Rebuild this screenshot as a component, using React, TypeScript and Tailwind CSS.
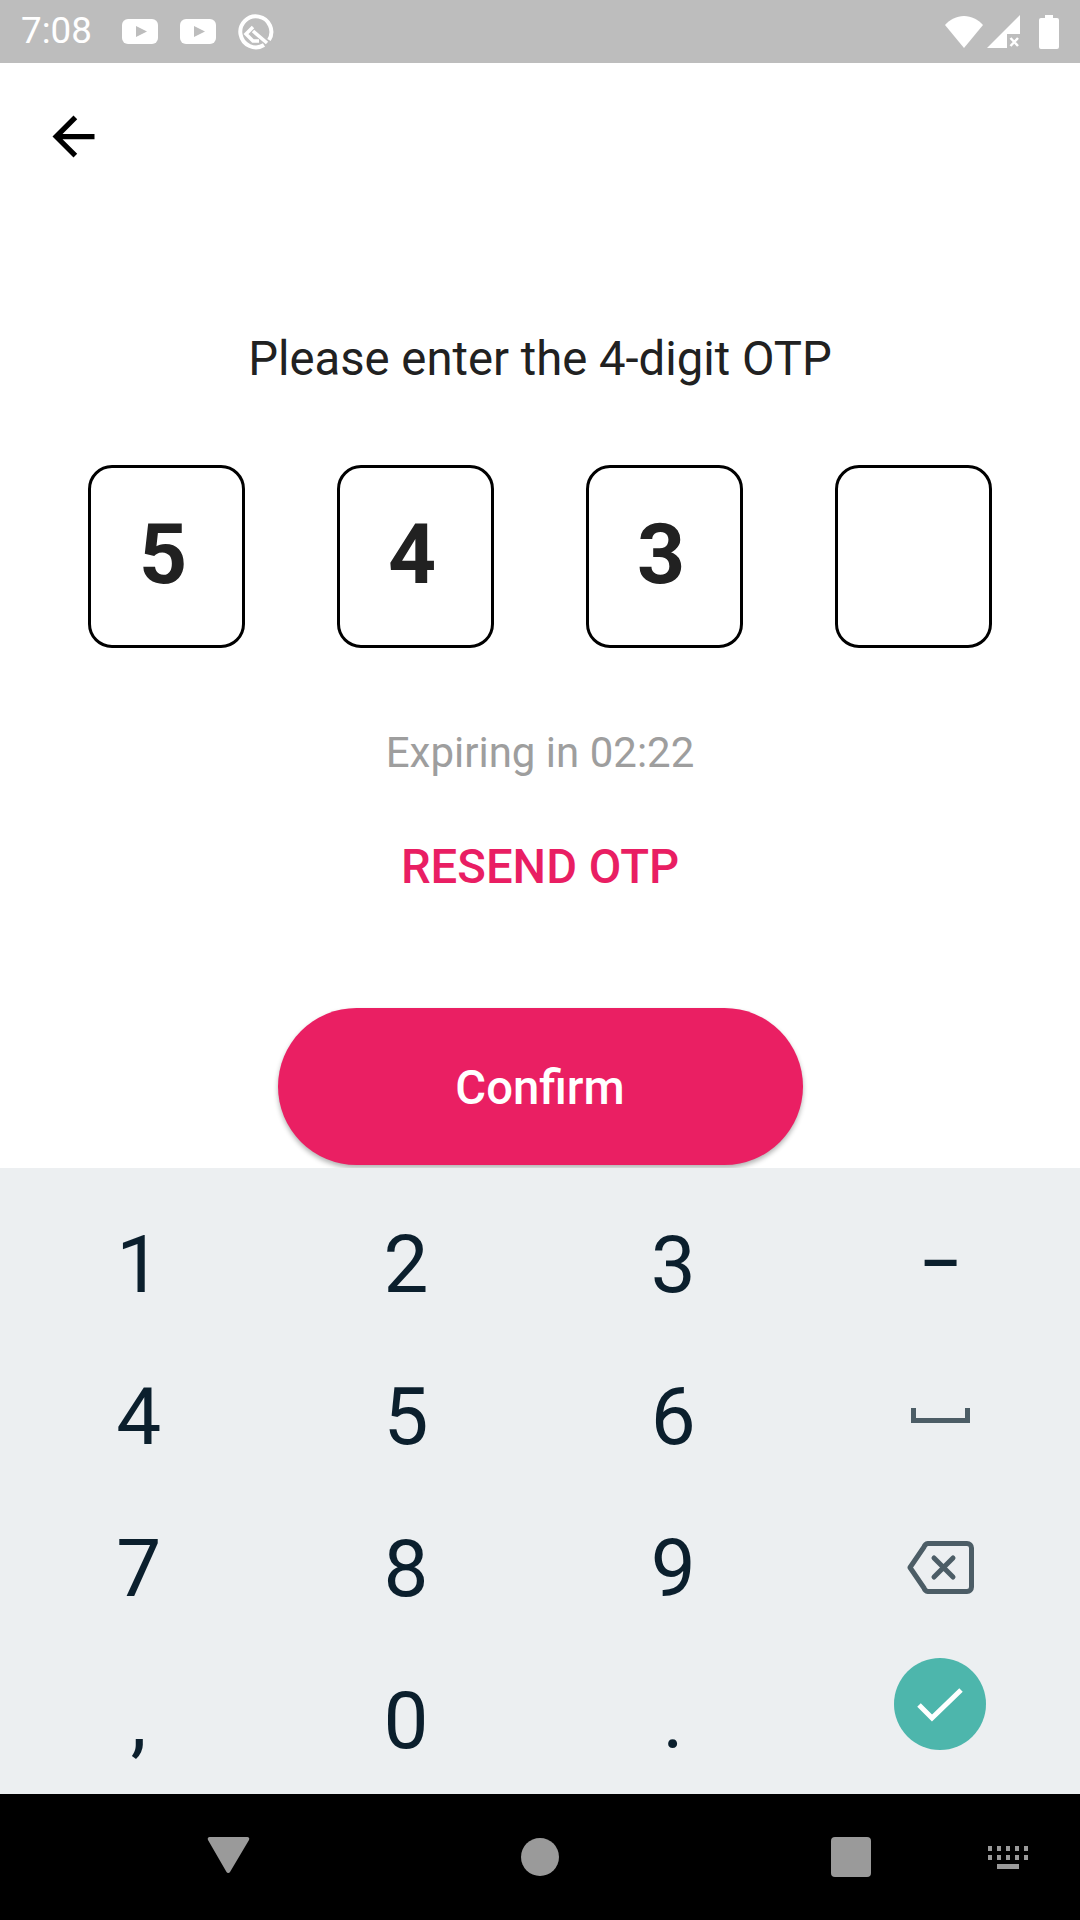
import React from "react";

const OTP_DIGITS = ["5", "4", "3", ""];
const PAD_KEYS = ["1", "2", "3", "–", "4", "5", "6", "space", "7", "8", "9", "back", ",", "0", ".", "done"];

const KeyText = ({ value }: { value: string }) => (
  <span className="text-[80px] leading-none text-[#0b1f2d]">{value}</span>
);

const YoutubeIcon = () => (
  <svg width="36" height="25" viewBox="0 0 36 25">
    <rect width="36" height="25" rx="6" fill="#fff" />
    <path d="M14 7l11 5.500L14 18z" fill="#bdbdbd" />
  </svg>
);

const StatusBar = () => (
  <div className="h-[63px] shrink-0 bg-[#bdbdbd] flex items-center pl-[21px] pr-[21px]">
    <span className="text-[36.75px] leading-none text-white w-[101px]">7:08</span>
    <div className="mr-[22px]">
      <YoutubeIcon />
    </div>
    <div className="mr-[22px]">
      <YoutubeIcon />
    </div>
    <svg width="36" height="36" viewBox="0 0 36 36" fill="none">
      <path d="M26 31A15.500 15.500 0 1 1 31 26" stroke="#fff" strokeWidth="4" />
      <path d="M15 13l-7 7 7 7h6" stroke="#fff" strokeWidth="3.500" />
      <path d="M15 17l14 12" stroke="#fff" strokeWidth="3.500" />
    </svg>
    <div className="ml-auto flex items-center">
      <svg width="38" height="32" viewBox="0 0 38 32" className="mr-[4px]">
        <path d="M19 32L0 9C5 3.500 11.500 0 19 0s14 3.500 19 9z" fill="#fff" />
      </svg>
      <svg width="33" height="33" viewBox="0 0 33 33" className="mr-[19px]">
        <path d="M33 0v19H20v14H0z" fill="#fff" />
        <path d="M23.500 23l7.500 8M31 23l-7.500 8" stroke="#fff" strokeWidth="2.500" />
      </svg>
      <svg width="20" height="34" viewBox="0 0 20 34">
        <path d="M6 0h8v3h4a2 2 0 0 1 2 2v27a2 2 0 0 1-2 2H2a2 2 0 0 1-2-2V5a2 2 0 0 1 2-2h4z" fill="#fff" />
      </svg>
    </div>
  </div>
);

const OtpBoxes = () => (
  <div className="mt-[80px] flex justify-between pl-[88px] pr-[88px]">
    {OTP_DIGITS.map((digit, i) => (
      <div
        key={i}
        className="w-[157px] h-[183px] rounded-[24px] border-[3px] border-black flex items-center justify-center pr-[7px] pb-[3px]"
      >
        <span className="text-[84px] leading-none font-bold text-[#212121]">{digit}</span>
      </div>
    ))}
  </div>
);

const NumberPad = () => (
  <div className="h-[626px] shrink-0 overflow-hidden bg-[#eceff1] pt-[21px] pl-[5px] pr-[6px] grid grid-cols-4 auto-rows-[152px]">
    {PAD_KEYS.map((k) => (
      <div key={k} className="flex items-center justify-center">
        {k === "–" ? (
          <span className="text-[64px] leading-none text-[#0b1f2d] font-medium">–</span>
        ) : k === "space" ? (
          <svg width="59" height="15" viewBox="0 0 59 15" fill="none" className="mb-[4px]">
            <path d="M2.500 0v12.500h54V0" stroke="#4c5d66" strokeWidth="5" />
          </svg>
        ) : k === "back" ? (
          <svg width="67" height="53" viewBox="0 0 67 53" fill="none" className="mb-[3px]">
            <path
              d="M3 26.500L17 6a5 5 0 0 1 4-3.500h39a4.500 4.500 0 0 1 4.500 4.500v39a4.500 4.500 0 0 1-4.500 4.500H21a5 5 0 0 1-4-3.500z"
              stroke="#4c5d66"
              strokeWidth="5"
              strokeLinejoin="round"
            />
            <path d="M27 17l19 19M46 17L27 36" stroke="#4c5d66" strokeWidth="5" strokeLinecap="round" />
          </svg>
        ) : k === "done" ? (
          <div className="w-[92px] h-[92px] rounded-full bg-[#4db6ac] flex items-center justify-center mb-[34px]">
            <svg width="46" height="35" viewBox="0 0 46 35" fill="none">
              <path d="M2 18l13 13L44 3" stroke="#fff" strokeWidth="5" />
            </svg>
          </div>
        ) : (
          <KeyText value={k} />
        )}
      </div>
    ))}
  </div>
);

const NavBar = () => (
  <div className="h-[126px] shrink-0 bg-black relative">
    <svg className="absolute left-[207px] top-[42px]" width="43" height="38" viewBox="0 0 43 38">
      <path d="M3 1h37a2 2 0 0 1 2 3L23 36a2 2 0 0 1-3.500 0L1 4a2 2 0 0 1 2-3z" fill="#9a9a9a" />
    </svg>
    <div className="absolute left-[521px] top-[44px] w-[38px] h-[38px] rounded-full bg-[#9a9a9a]" />
    <div className="absolute left-[831px] top-[43px] w-[40px] h-[40px] rounded-[4px] bg-[#9a9a9a]" />
    <svg className="absolute left-[988px] top-[52px]" width="40" height="24" viewBox="0 0 40 24" fill="#9a9a9a">
      <path d="M0 0h4v5H0zM9 0h4v5H9zM18 0h4v5h-4zM27 0h4v5h-4zM36 0h4v5h-4zM0 9h4v5H0zM9 9h4v5H9zM18 9h4v5h-4zM27 9h4v5h-4zM36 9h4v5h-4zM9 18h22v5H9z" />
    </svg>
  </div>
);

export default function App() {
  return (
    <div className="w-[1080px] h-[1920px] flex flex-col bg-white font-['Roboto',sans-serif] overflow-hidden">
      <StatusBar />
      <main className="flex-1">
        <div className="pl-[42px] pt-[42px]">
          <svg width="63" height="63" viewBox="0 0 24 24" fill="#000">
            <path d="M20 11H7.830l5.590-5.590L12 4l-8 8 8 8 1.410-1.410L7.830 13H20v-2z" />
          </svg>
        </div>
        <p className="mt-[165px] text-center text-[47.25px] leading-[52px] text-[#212121]">
          Please enter the 4-digit OTP
        </p>
        <OtpBoxes />
        <p className="mt-[80px] text-center text-[42px] leading-[50px] text-[#9e9e9e]">Expiring in 02:22</p>
        <p className="mt-[64px] text-center text-[47.25px] leading-[50px] font-medium text-[#e91e63]">RESEND OTP</p>
        <div className="mt-[116px] flex justify-center">
          <button className="w-[525px] h-[157px] pt-[3px] rounded-full bg-[#ea1f63] text-white text-[47.25px] font-medium shadow-[0_3px_5px_rgba(0,0,0,0.3)]">
            Confirm
          </button>
        </div>
      </main>
      <NumberPad />
      <NavBar />
    </div>
  );
}
